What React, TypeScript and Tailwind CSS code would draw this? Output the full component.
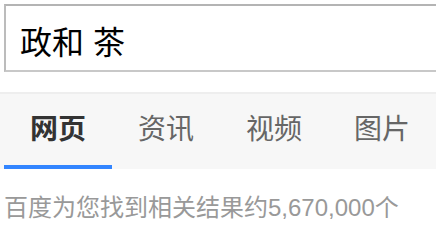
const TABS = ['网页', '资讯', '视频', '图片'];

export default function App() {
    const font = { fontFamily: '"Liberation Sans", "Noto Sans CJK SC", sans-serif' };
    return (
        <div className="w-[436px] h-[237px] overflow-hidden bg-white" style={font}>
            {/* Search box */}
            <div className="pl-[4px] pt-[4px]">
                <div className="w-[460px] h-[68px] border-2 border-t-[#b4b4b4] border-l-[#bcbcbc] border-b-[#c8c8c8] border-r-[#c8c8c8] bg-white flex items-center pl-[14px] pt-[9px]">
                    <span className="text-[32px] leading-[32px] text-black">政和 茶</span>
                </div>
            </div>

            {/* Tabs */}
            <div className="mt-[20px] border-t-2 border-[#eeeeee] bg-[#f7f7f7] flex pl-[4px]">
                {TABS.map((t, i) => (
                    <div
                        key={t}
                        className={`w-[108px] h-[75px] flex items-center justify-center border-b-4 text-[28px] leading-[28px] ${i === 0 ? 'border-[#3385ff] text-[#333333] font-bold' : 'border-transparent text-[#666666]'}`}
                    >
                        {t}
                    </div>
                ))}
            </div>

            {/* Result count */}
            <div className="pl-[4px] mt-[27px] text-[24px] leading-[24px] text-[#999999]">
                百度为您找到相关结果约5,670,000个
            </div>
        </div>
    );
}
